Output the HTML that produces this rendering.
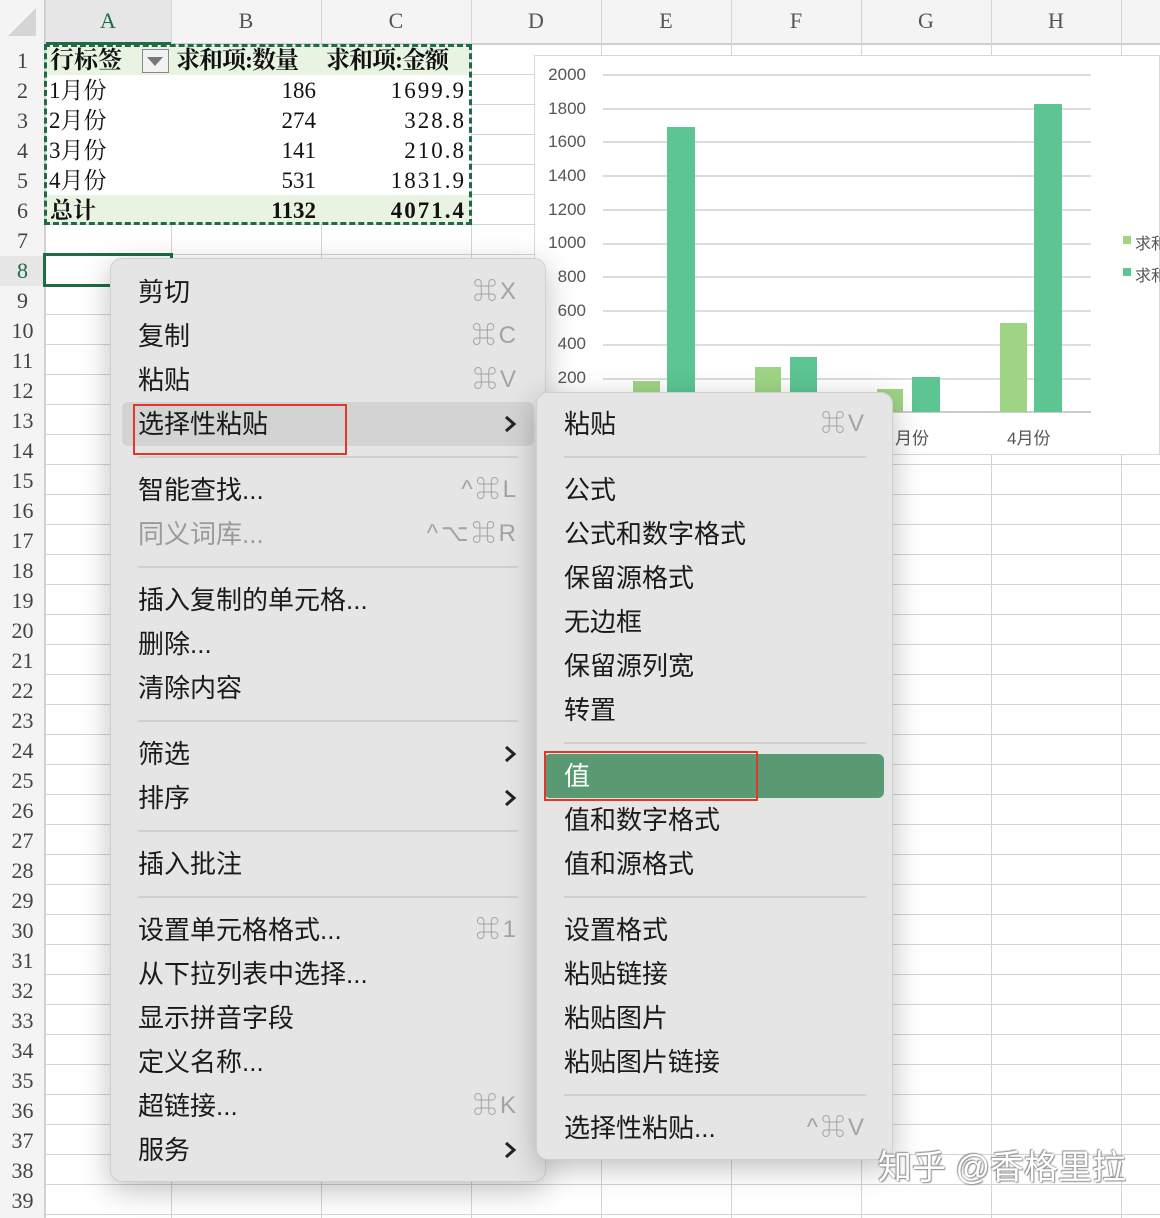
<!DOCTYPE html>
<html><head><meta charset="utf-8"><style>
*{margin:0;padding:0;box-sizing:border-box}
body{width:1160px;height:1218px;position:relative;overflow:hidden;background:#fff;font-family:"Liberation Sans","Noto Sans CJK SC",sans-serif}
.a{position:absolute}
.vl{position:absolute;top:0;width:1px;height:1218px;background:#d4d4d4}
.rn{position:absolute;left:0;width:45px;text-align:center;font-family:"Liberation Serif","Noto Serif CJK SC",serif;font-size:22px;color:#444;line-height:30px}
.ch{position:absolute;top:8px;font-family:"Liberation Serif","Noto Serif CJK SC",serif;font-size:22px;color:#555;text-align:center}
.c{position:absolute;font-family:"Liberation Serif","Noto Serif CJK SC",serif;font-size:23px;line-height:30px;color:#111;white-space:nowrap}
.it{position:absolute;font-size:26px;line-height:30px;color:#1a1a1a;white-space:nowrap}
.g{color:#9a9a9a}
.sc{position:absolute;font-size:24px;line-height:30px;color:#a3a3a3;text-align:right;white-space:nowrap;letter-spacing:3px}
.sep{position:absolute;height:2px;background:#cfcfcf}
.yl{position:absolute;left:540px;width:46px;text-align:right;font-size:17px;color:#555;line-height:20px}
.gl{position:absolute;left:603px;width:488px;height:2px;background:#dcdcdc}
.arr{position:absolute;width:14px;height:20px}
</style></head><body>
<div class="a" style="left:0;top:45px;width:1160px;height:1173px;background:repeating-linear-gradient(to bottom,transparent 0,transparent 29px,#d4d4d4 29px,#d4d4d4 30px)"></div>
<div class="a" style="left:0;top:0;width:1160px;height:45px;background:#f4f4f4;border-bottom:2px solid #cfcfcf"></div>
<div class="a" style="left:0;top:0;width:45px;height:1218px;background:#f4f4f4;border-right:1px solid #cfcfcf"></div>
<div class="a" style="left:45px;top:0;width:126px;height:45px;background:#e6e6e6;border-bottom:3px solid #1e6b45"></div>
<div class="a" style="left:8px;top:8px;width:0;height:0;border-left:28px solid transparent;border-bottom:28px solid #d6d6d6"></div>
<div class="vl" style="left:45px"></div><div class="vl" style="left:171px"></div><div class="vl" style="left:321px"></div><div class="vl" style="left:471px"></div><div class="vl" style="left:601px"></div><div class="vl" style="left:731px"></div><div class="vl" style="left:861px"></div><div class="vl" style="left:991px"></div><div class="vl" style="left:1121px"></div>
<div class="ch" style="left:45px;width:126px;color:#1e6b45">A</div>
<div class="ch" style="left:171px;width:150px">B</div><div class="ch" style="left:321px;width:150px">C</div><div class="ch" style="left:471px;width:130px">D</div><div class="ch" style="left:601px;width:130px">E</div><div class="ch" style="left:731px;width:130px">F</div><div class="ch" style="left:861px;width:130px">G</div><div class="ch" style="left:991px;width:130px">H</div>
<div class="rn" style="top:46px">1</div><div class="rn" style="top:76px">2</div><div class="rn" style="top:106px">3</div><div class="rn" style="top:136px">4</div><div class="rn" style="top:166px">5</div><div class="rn" style="top:196px">6</div><div class="rn" style="top:226px">7</div><div class="rn" style="top:256px;color:#1e6b45;background:#e6e6e6">8</div><div class="rn" style="top:286px">9</div><div class="rn" style="top:316px">10</div><div class="rn" style="top:346px">11</div><div class="rn" style="top:376px">12</div><div class="rn" style="top:406px">13</div><div class="rn" style="top:436px">14</div><div class="rn" style="top:466px">15</div><div class="rn" style="top:496px">16</div><div class="rn" style="top:526px">17</div><div class="rn" style="top:556px">18</div><div class="rn" style="top:586px">19</div><div class="rn" style="top:616px">20</div><div class="rn" style="top:646px">21</div><div class="rn" style="top:676px">22</div><div class="rn" style="top:706px">23</div><div class="rn" style="top:736px">24</div><div class="rn" style="top:766px">25</div><div class="rn" style="top:796px">26</div><div class="rn" style="top:826px">27</div><div class="rn" style="top:856px">28</div><div class="rn" style="top:886px">29</div><div class="rn" style="top:916px">30</div><div class="rn" style="top:946px">31</div><div class="rn" style="top:976px">32</div><div class="rn" style="top:1006px">33</div><div class="rn" style="top:1036px">34</div><div class="rn" style="top:1066px">35</div><div class="rn" style="top:1096px">36</div><div class="rn" style="top:1126px">37</div><div class="rn" style="top:1156px">38</div><div class="rn" style="top:1186px">39</div>
<!-- pivot table -->
<div class="a" style="left:46px;top:46px;width:424px;height:178px;background:#fff"></div>
<div class="a" style="left:46px;top:46px;width:424px;height:29px;background:#e8f3e2"></div>
<div class="a" style="left:46px;top:195px;width:424px;height:29px;background:#e8f3e2"></div>
<div class="a" style="left:142px;top:49px;width:27px;height:24px;border:1px solid #888;background:#f2f2f2"></div>
<div class="a" style="left:147px;top:57px;width:0;height:0;border-left:8px solid transparent;border-right:8px solid transparent;border-top:9px solid #777"></div>
<div class="c" style="left:50px;top:46px;font-weight:bold;font-size:24px">行标签</div>
<div class="c" style="left:176px;top:46px;font-weight:bold;font-size:24px;letter-spacing:-1px">求和项:数量</div>
<div class="c" style="left:326px;top:46px;font-weight:bold;font-size:24px;letter-spacing:-1px">求和项:金额</div>
<div class="c" style="left:49px;top:76px">1月份</div><div class="c" style="left:171px;width:145px;text-align:right;top:76px">186</div><div class="c" style="left:321px;width:145px;text-align:right;top:76px;letter-spacing:2px">1699.9</div>
<div class="c" style="left:49px;top:106px">2月份</div><div class="c" style="left:171px;width:145px;text-align:right;top:106px">274</div><div class="c" style="left:321px;width:145px;text-align:right;top:106px;letter-spacing:2px">328.8</div>
<div class="c" style="left:49px;top:136px">3月份</div><div class="c" style="left:171px;width:145px;text-align:right;top:136px">141</div><div class="c" style="left:321px;width:145px;text-align:right;top:136px;letter-spacing:2px">210.8</div>
<div class="c" style="left:49px;top:166px">4月份</div><div class="c" style="left:171px;width:145px;text-align:right;top:166px">531</div><div class="c" style="left:321px;width:145px;text-align:right;top:166px;letter-spacing:2px">1831.9</div>
<div class="c" style="left:50px;top:196px;font-weight:bold">总计</div><div class="c" style="left:171px;width:145px;text-align:right;top:196px;font-weight:bold">1132</div><div class="c" style="left:321px;width:145px;text-align:right;top:196px;font-weight:bold;letter-spacing:2px">4071.4</div>
<div class="a" style="left:44px;top:44px;width:428px;height:181px;border:3px dashed #1e6b45"></div>
<div class="a" style="left:43px;top:253px;width:130px;height:34px;border:3px solid #1e6b45"></div>
<!-- chart -->
<div class="a" style="left:534px;top:55px;width:626px;height:400px;background:#fff;border:1px solid #d8d8d8;overflow:hidden"></div>
<div class="gl" style="top:74px"></div><div class="gl" style="top:108px"></div><div class="gl" style="top:141px"></div><div class="gl" style="top:175px"></div><div class="gl" style="top:209px"></div><div class="gl" style="top:243px"></div><div class="gl" style="top:276px"></div><div class="gl" style="top:310px"></div><div class="gl" style="top:344px"></div><div class="gl" style="top:378px"></div><div class="gl" style="top:411px;background:#ccc"></div>
<div class="yl" style="top:65px">2000</div><div class="yl" style="top:99px">1800</div><div class="yl" style="top:132px">1600</div><div class="yl" style="top:166px">1400</div><div class="yl" style="top:200px">1200</div><div class="yl" style="top:233px">1000</div><div class="yl" style="top:267px">800</div><div class="yl" style="top:301px">600</div><div class="yl" style="top:334px">400</div><div class="yl" style="top:368px">200</div>
<div class="a" style="left:633px;top:381px;width:27px;height:31px;background:#9fd485"></div>
<div class="a" style="left:667px;top:127px;width:28px;height:285px;background:#5cc592"></div>
<div class="a" style="left:755px;top:367px;width:26px;height:45px;background:#9fd485"></div>
<div class="a" style="left:790px;top:357px;width:27px;height:55px;background:#5cc592"></div>
<div class="a" style="left:877px;top:389px;width:26px;height:23px;background:#9fd485"></div>
<div class="a" style="left:912px;top:377px;width:28px;height:35px;background:#5cc592"></div>
<div class="a" style="left:1000px;top:323px;width:27px;height:89px;background:#9fd485"></div>
<div class="a" style="left:1034px;top:104px;width:28px;height:308px;background:#5cc592"></div>
<div class="a" style="left:895px;top:424px;font-size:17px;color:#555">月份</div>
<div class="a" style="left:1007px;top:424px;font-size:17px;color:#555">4月份</div>
<div class="a" style="left:1123px;top:236px;width:8px;height:8px;background:#9fd485"></div><div class="a" style="left:1135px;top:230px;font-size:16px;color:#555;white-space:nowrap">求和</div>
<div class="a" style="left:1123px;top:268px;width:8px;height:8px;background:#5cc592"></div><div class="a" style="left:1135px;top:262px;font-size:16px;color:#555;white-space:nowrap">求和</div>
<!-- menu 1 -->
<div class="a" style="left:110px;top:258px;width:436px;height:924px;background:#e5e5e5;border:1px solid #cfcfcf;border-radius:12px;box-shadow:0 8px 30px rgba(0,0,0,.25)"></div>
<div class="a" style="left:122px;top:402px;width:412px;height:44px;background:#d3d3d3;border-radius:6px"></div>
<div class="it" style="left:138px;top:277px">剪切</div><div class="sc" style="left:420px;width:99px;top:277px">⌘X</div>
<div class="it" style="left:138px;top:321px">复制</div><div class="sc" style="left:420px;width:99px;top:321px">⌘C</div>
<div class="it" style="left:138px;top:365px">粘贴</div><div class="sc" style="left:420px;width:99px;top:365px">⌘V</div>
<div class="it" style="left:138px;top:409px">选择性粘贴</div>
<svg class="arr" style="left:503px;top:414px" viewBox="0 0 14 20"><path d="M3 3 L11 10 L3 17" fill="none" stroke="#222" stroke-width="3"/></svg>
<div class="sep" style="left:138px;top:456px;width:380px"></div>
<div class="it" style="left:138px;top:475px">智能查找...</div><div class="sc" style="left:400px;width:119px;top:475px">^⌘L</div>
<div class="it g" style="left:138px;top:519px">同义词库...</div><div class="sc" style="left:380px;width:139px;top:519px">^⌥⌘R</div>
<div class="sep" style="left:138px;top:566px;width:380px"></div>
<div class="it" style="left:138px;top:585px">插入复制的单元格...</div>
<div class="it" style="left:138px;top:629px">删除...</div>
<div class="it" style="left:138px;top:673px">清除内容</div>
<div class="sep" style="left:138px;top:720px;width:380px"></div>
<div class="it" style="left:138px;top:739px">筛选</div>
<svg class="arr" style="left:503px;top:744px" viewBox="0 0 14 20"><path d="M3 3 L11 10 L3 17" fill="none" stroke="#222" stroke-width="3"/></svg>
<div class="it" style="left:138px;top:783px">排序</div>
<svg class="arr" style="left:503px;top:788px" viewBox="0 0 14 20"><path d="M3 3 L11 10 L3 17" fill="none" stroke="#222" stroke-width="3"/></svg>
<div class="sep" style="left:138px;top:830px;width:380px"></div>
<div class="it" style="left:138px;top:849px">插入批注</div>
<div class="sep" style="left:138px;top:896px;width:380px"></div>
<div class="it" style="left:138px;top:915px">设置单元格格式...</div><div class="sc" style="left:420px;width:99px;top:915px">⌘1</div>
<div class="it" style="left:138px;top:959px">从下拉列表中选择...</div>
<div class="it" style="left:138px;top:1003px">显示拼音字段</div>
<div class="it" style="left:138px;top:1047px">定义名称...</div>
<div class="it" style="left:138px;top:1091px">超链接...</div><div class="sc" style="left:420px;width:99px;top:1091px">⌘K</div>
<div class="it" style="left:138px;top:1135px">服务</div>
<svg class="arr" style="left:503px;top:1140px" viewBox="0 0 14 20"><path d="M3 3 L11 10 L3 17" fill="none" stroke="#222" stroke-width="3"/></svg>
<div class="a" style="left:133px;top:404px;width:214px;height:51px;border:2px solid #e0392a"></div>
<!-- menu 2 -->
<div class="a" style="left:536px;top:392px;width:357px;height:768px;background:#e5e5e5;border:1px solid #cfcfcf;border-radius:12px;box-shadow:0 8px 30px rgba(0,0,0,.25)"></div>
<div class="a" style="left:544px;top:754px;width:340px;height:44px;background:#5a9a73;border-radius:6px"></div>
<div class="it" style="left:564px;top:409px">粘贴</div><div class="sc" style="left:768px;width:99px;top:409px">⌘V</div>
<div class="sep" style="left:564px;top:456px;width:302px"></div>
<div class="it" style="left:564px;top:475px">公式</div>
<div class="it" style="left:564px;top:519px">公式和数字格式</div>
<div class="it" style="left:564px;top:563px">保留源格式</div>
<div class="it" style="left:564px;top:607px">无边框</div>
<div class="it" style="left:564px;top:651px">保留源列宽</div>
<div class="it" style="left:564px;top:695px">转置</div>
<div class="sep" style="left:564px;top:742px;width:302px"></div>
<div class="it" style="left:564px;top:761px;color:#fff">值</div>
<div class="it" style="left:564px;top:805px">值和数字格式</div>
<div class="it" style="left:564px;top:849px">值和源格式</div>
<div class="sep" style="left:564px;top:896px;width:302px"></div>
<div class="it" style="left:564px;top:915px">设置格式</div>
<div class="it" style="left:564px;top:959px">粘贴链接</div>
<div class="it" style="left:564px;top:1003px">粘贴图片</div>
<div class="it" style="left:564px;top:1047px">粘贴图片链接</div>
<div class="sep" style="left:564px;top:1094px;width:302px"></div>
<div class="it" style="left:564px;top:1113px">选择性粘贴...</div><div class="sc" style="left:748px;width:119px;top:1113px">^⌘V</div>
<div class="a" style="left:544px;top:751px;width:214px;height:50px;border:2px solid #e0392a"></div>
<div class="a" style="left:878px;top:1147px;font-size:34px;line-height:42px;color:#fff;text-shadow:0 0 2px #888,1px 1px 1px #999,-1px -1px 1px #999;white-space:nowrap">知乎 @香格里拉</div>
</body></html>
